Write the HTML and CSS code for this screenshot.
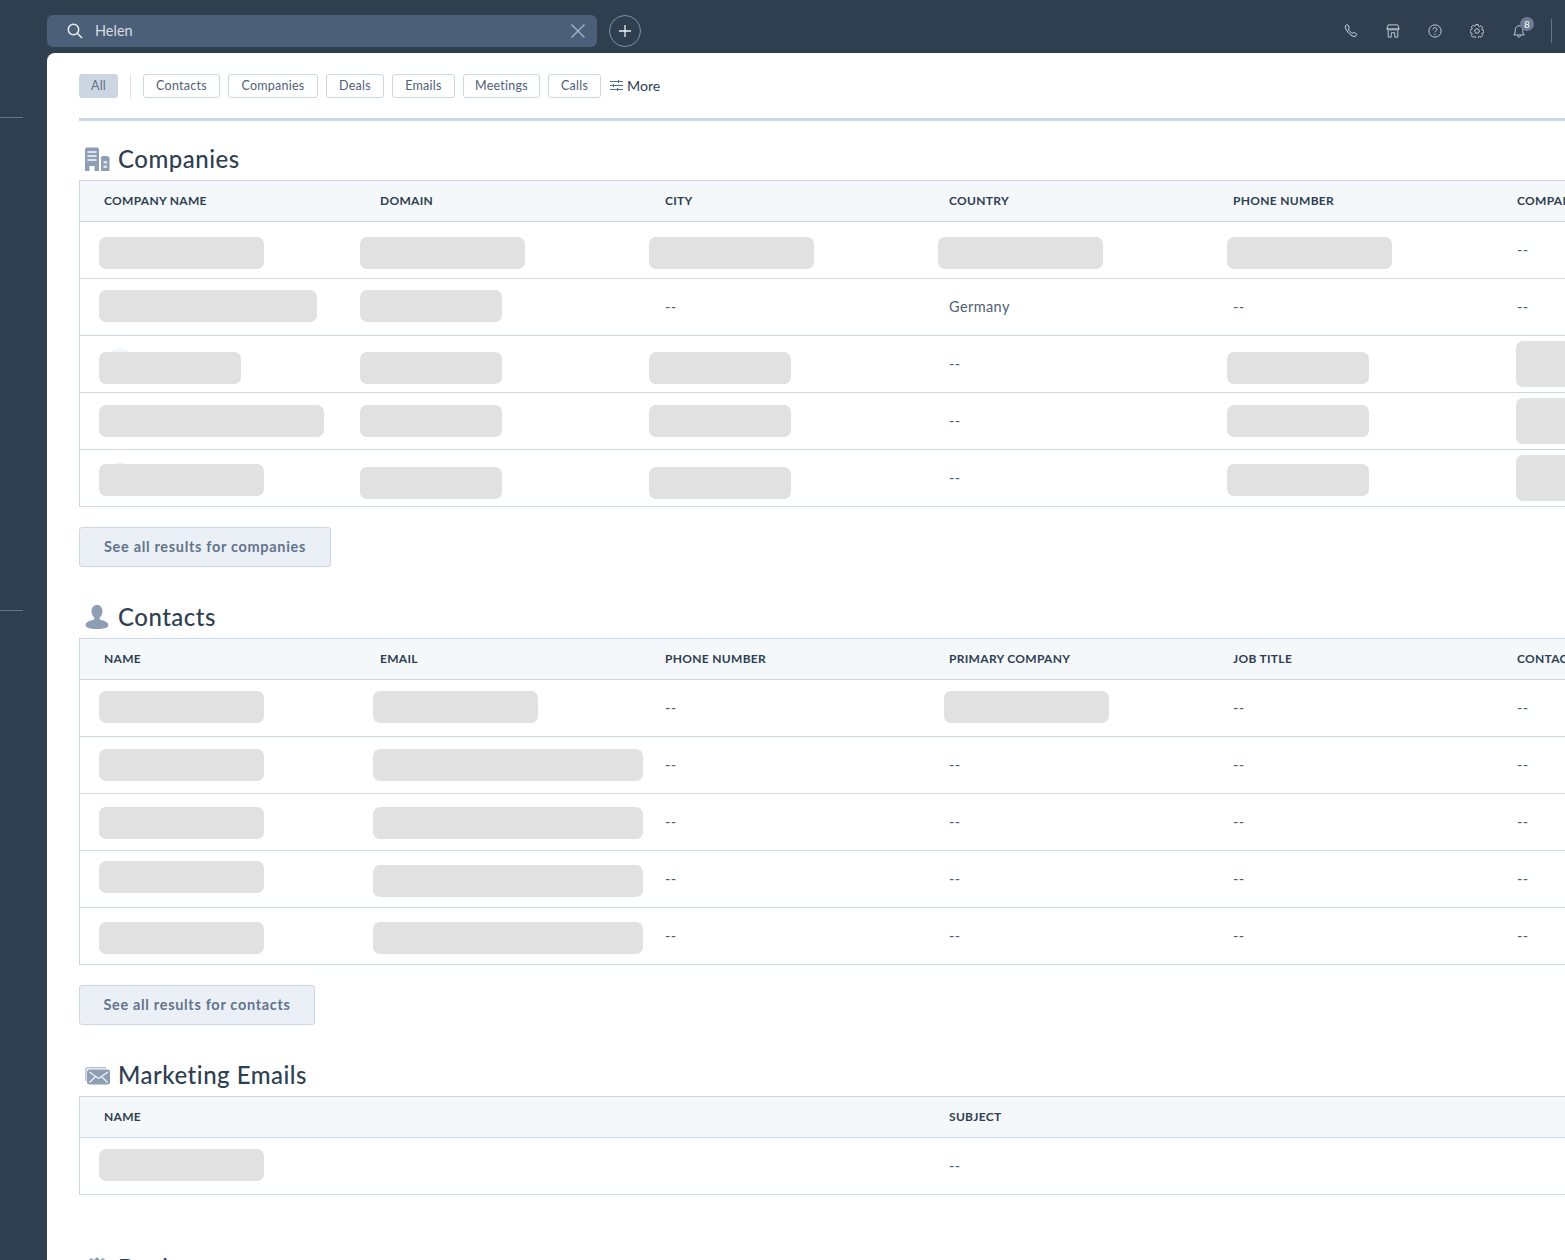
FILE: index.html
```html
<!DOCTYPE html>
<html lang="en">
<head>
<meta charset="utf-8">
<title>Search results</title>
<link rel="stylesheet" href="styles.css">
</head>
<body>
<div class="app">
  <aside class="sidebar"><div class="side-line"></div><div class="side-line second"></div></aside>
  <div class="main">
    <header class="topbar">
      <div class="search">
        <svg class="search-icon" viewBox="0 0 16 16"><circle cx="6.5" cy="6.5" r="5.2"/><path d="M10.3 10.3L15 15"/></svg>
        <span class="search-text">Helen</span>
        <svg class="search-clear" viewBox="0 0 14 14"><path d="M.5.5l13 13M13.500.5l-13 13"/></svg>
      </div>
      <button class="add"><svg viewBox="0 0 12 12"><path d="M6 0v12M0 6h12"/></svg></button>
      <div class="top-icons">
        <svg class="ti" viewBox="0 0 14 14"><path d="M1.500 1.800C2 1 3.300.5 3.900 1.100l1.300 2.300c.2.500-.6 1.300-.8 1.700-.2.600 2.800 4.300 4.100 4.100.5-.1 1.100-.9 1.700-.7l2.300 1.500c.5.500-.1 1.700-1 2.200-1.600.9-4.400-.4-6.800-3.300C2.300 6.300.6 3.500 1.500 1.800z"/></svg>
        <svg class="ti" viewBox="0 0 16 16"><path d="M2.500 1h11l1.500 4.500c0 2.200-3.300 2.200-3.500 0 0 2.200-3.300 2.200-3.500 0 0 2.200-3.300 2.200-3.500 0C4.300 7.700 1 7.700 1 5.500zM1 5.500h14M2.500 7.500V15h3.500v-5h4v5h3.500V7.500"/></svg>
        <svg class="ti" viewBox="0 0 16 16"><circle cx="8" cy="8" r="7"/><path d="M5.800 6.200C5.900 4.800 6.900 4.200 8 4.200c1.300 0 2.200.8 2.200 1.900 0 1.700-2.200 1.600-2.200 3.500"/><circle class="dot" cx="8" cy="11.800" r=".7"/></svg>
        <svg class="ti" viewBox="0 0 16 16"><circle cx="8" cy="8" r="2.600"/><path d="M6.700 .6h2.600l.4 1.900 1.300.6 1.700-1 1.800 1.800-1 1.700.6 1.300 1.900.4v2.600l-1.900.4-.6 1.300 1 1.700-1.800 1.800-1.700-1-1.300.6-.4 1.900H6.700l-.4-1.900-1.300-.6-1.700 1-1.800-1.800 1-1.700-.6-1.300-1.900-.4V6.700l1.900-.4.600-1.300-1-1.700 1.800-1.800 1.700 1 1.300-.6z"/></svg>
        <div class="bell">
          <svg class="ti" viewBox="0 0 14 16"><path d="M1 12.500c1.500-1.300 1.700-3 1.700-5.500C2.700 4 4.500 2 7 2s4.300 2 4.300 5c0 2.500.2 4.200 1.700 5.500zM5.300 13c0 2.700 3.400 2.700 3.400 0"/></svg>
          <span class="badge">8</span>
        </div>
        <div class="top-sep"></div>
      </div>
    </header>
    <main class="panel">
      <nav class="filters">
        <span class="chip active">All</span>
        <span class="filter-sep"></span>
        <span class="chip">Contacts</span>
        <span class="chip">Companies</span>
        <span class="chip">Deals</span>
        <span class="chip">Emails</span>
        <span class="chip">Meetings</span>
        <span class="chip">Calls</span>
        <span class="more">
          <svg viewBox="0 0 13 11"><path d="M0 1.500h13M0 5.500h13M0 9.500h13"/><path class="knob" d="M8.500 0v3M3.500 4v3M7.500 8v3"/></svg>
          More
        </span>
      </nav>

      <section class="section first">
        <h2 class="heading">
          <svg class="h-icon" viewBox="0 0 26 24"><path class="i-main" d="M1 2.500C1 1.500 2 .5 3 .5h10c1 0 2 1 2 2V24h-4.500v-5h-5v5H1z"/><path class="i-light" d="M3.500 4h9v2h-9zM3.500 8h9v2h-9zM3.500 12h9v2h-9z"/><path class="i-main" d="M17 11c0-1 1-2 2-2h4c1 0 2.500 1 2.500 2v13H17z"/><path class="i-light" d="M19.500 14h3.500v2.500h-3.500zM19.500 18.500h3.500V21h-3.500z"/></svg>
          Companies
        </h2>
        <div class="table">
          <div class="row head six"><div>Company name</div><div>Domain</div><div>City</div><div>Country</div><div>Phone number</div><div>Compan</div></div>
          <div class="row six">
            <div class="cell"><i class="sk w165 x19 y15"></i></div>
            <div class="cell"><i class="sk w165 x4 y15"></i></div>
            <div class="cell"><i class="sk w165 x8 y15"></i></div>
            <div class="cell"><i class="sk w165 x13 y15"></i></div>
            <div class="cell"><i class="sk w165 x18 y15"></i></div>
            <div class="cell txt">--</div>
          </div>
          <div class="row six">
            <div class="cell"><i class="sk w218 x19 y11"></i></div>
            <div class="cell"><i class="sk w142 x4 y11"></i></div>
            <div class="cell txt">--</div>
            <div class="cell txt">Germany</div>
            <div class="cell txt">--</div>
            <div class="cell txt">--</div>
          </div>
          <div class="row six">
            <div class="cell"><span class="ghost"></span><i class="sk w142 x19 y16"></i></div>
            <div class="cell"><i class="sk w142 x4 y16"></i></div>
            <div class="cell"><i class="sk w142 x8 y16"></i></div>
            <div class="cell txt">--</div>
            <div class="cell"><i class="sk w142 x18 y16"></i></div>
            <div class="cell"><i class="sk tall x23 y5"></i></div>
          </div>
          <div class="row six">
            <div class="cell"><i class="sk w225 x19 y12"></i></div>
            <div class="cell"><i class="sk w142 x4 y12"></i></div>
            <div class="cell"><i class="sk w142 x8 y12"></i></div>
            <div class="cell txt">--</div>
            <div class="cell"><i class="sk w142 x18 y12"></i></div>
            <div class="cell"><i class="sk tall x23 y5"></i></div>
          </div>
          <div class="row six">
            <div class="cell"><span class="ghost"></span><i class="sk w165 x19 y14"></i></div>
            <div class="cell"><i class="sk w142 x4 y17"></i></div>
            <div class="cell"><i class="sk w142 x8 y17"></i></div>
            <div class="cell txt">--</div>
            <div class="cell"><i class="sk w142 x18 y14"></i></div>
            <div class="cell"><i class="sk tall x23 y5"></i></div>
          </div>
        </div>
        <button class="see-all companies">See all results for companies</button>
      </section>

      <section class="section">
        <h2 class="heading">
          <svg class="h-icon" viewBox="0 0 26 24"><path class="i-main" d="M13 0c3.400 0 5.500 2.600 5.500 6.200 0 2.700-1.100 5-2.800 6.200v2c2.800.8 7.300 2 8.300 4 .6 1.200.5 2.600-.5 3.500-1.600 1.400-6.300 2.100-10.500 2.100S4.100 23.300 2.500 21.900c-1-.9-1.100-2.300-.5-3.500 1-2 5.500-3.200 8.300-4v-2C8.600 11.200 7.500 8.900 7.500 6.200 7.500 2.600 9.600 0 13 0z"/></svg>
          Contacts
        </h2>
        <div class="table">
          <div class="row head six"><div>Name</div><div>Email</div><div>Phone number</div><div>Primary company</div><div>Job title</div><div>Contac</div></div>
          <div class="row six">
            <div class="cell"><i class="sk w165 x19 y11"></i></div>
            <div class="cell"><i class="sk w165 x17 y11"></i></div>
            <div class="cell txt">--</div>
            <div class="cell"><i class="sk w165 x19 y11"></i></div>
            <div class="cell txt">--</div>
            <div class="cell txt">--</div>
          </div>
          <div class="row six">
            <div class="cell"><i class="sk w165 x19 y12"></i></div>
            <div class="cell"><i class="sk w270 x17 y12"></i></div>
            <div class="cell txt">--</div><div class="cell txt">--</div><div class="cell txt">--</div><div class="cell txt">--</div>
          </div>
          <div class="row six">
            <div class="cell"><i class="sk w165 x19 y13"></i></div>
            <div class="cell"><i class="sk w270 x17 y13"></i></div>
            <div class="cell txt">--</div><div class="cell txt">--</div><div class="cell txt">--</div><div class="cell txt">--</div>
          </div>
          <div class="row six">
            <div class="cell"><i class="sk w165 x19 y10"></i></div>
            <div class="cell"><i class="sk w270 x17 y14"></i></div>
            <div class="cell txt">--</div><div class="cell txt">--</div><div class="cell txt">--</div><div class="cell txt">--</div>
          </div>
          <div class="row six">
            <div class="cell"><i class="sk w165 x19 y14"></i></div>
            <div class="cell"><i class="sk w270 x17 y14"></i></div>
            <div class="cell txt">--</div><div class="cell txt">--</div><div class="cell txt">--</div><div class="cell txt">--</div>
          </div>
        </div>
        <button class="see-all contacts">See all results for contacts</button>
      </section>

      <section class="section">
        <h2 class="heading">
          <svg class="h-icon" viewBox="0 0 26 24"><path class="i-pale" d="M1 6.500C1 5 2 4 3.500 4H22v1.500H4C3 5.500 2.500 6 2.500 7v11H1z"/><rect class="i-main" x="3" y="6.500" width="23" height="15" rx="2.500"/><path class="i-line" d="M5.500 9l9 6.500L24 9M5.500 19.500l6-6M23.500 19.500l-6-6"/></svg>
          Marketing Emails
        </h2>
        <div class="table">
          <div class="row head two"><div>Name</div><div>Subject</div></div>
          <div class="row two">
            <div class="cell"><i class="sk w165 x19 y11"></i></div>
            <div class="cell txt">--</div>
          </div>
        </div>
      </section>

      <section class="section last">
        <h2 class="heading">
          <svg class="h-icon" viewBox="0 0 26 24"><path class="i-main" d="M1 8l6-6 3 2 3-3 3 3 3-2 6 6-3 6H4z"/></svg>
          Deals
        </h2>
      </section>
    </main>
  </div>
</div>
</body>
</html>
```

FILE: styles.css
```css
* { box-sizing: border-box; }
html, body { margin: 0; height: 1260px; overflow: hidden; }
body { font-family: Lato, "Noto Sans", sans-serif; color: #2f3f52; background: #303f50; }

.app { display: flex; height: 1260px; }

.sidebar { width: 47px; flex: none; padding-top: 117px; }
.side-line { width: 23px; height: 1px; background: #63758a; }
.side-line.second { margin-top: 492px; }

.main { flex: 1; min-width: 0; display: flex; flex-direction: column; }

.topbar { height: 53px; flex: none; display: flex; align-items: flex-start; padding-top: 15px; }
.search { width: 550px; height: 32px; background: #4b5f78; border-radius: 6px; display: flex; align-items: center; padding: 0 12px 0 20px; color: #d5dbe4; }
.search-icon { width: 16px; height: 16px; fill: none; stroke: #eaf0f6; stroke-width: 1.5; flex: none; }
.search-text { margin-left: 12px; padding-bottom: 2px; font-size: 14.5px; flex: 1; }
.search-clear { width: 14px; height: 14px; fill: none; stroke: #a9b6c6; stroke-width: 1.3; flex: none; }
.add { width: 32px; height: 32px; margin-left: 12px; padding: 0; background: transparent; border: 1px solid #8091a6; border-radius: 50%; display: flex; align-items: center; justify-content: center; }
.add svg { width: 12px; height: 12px; fill: none; stroke: #eaf0f6; stroke-width: 1.300; }

.top-icons { margin-left: auto; display: flex; align-items: center; height: 32px; padding-right: 13px; }
.ti { width: 14px; height: 14px; fill: none; stroke: #d5dbe4; stroke-width: 1; display: block; margin-left: 28px; }
.ti .dot { fill: #d5dbe4; stroke: none; }
.bell { position: relative; }
.badge { position: absolute; top: -7px; left: 36px; width: 14px; height: 14px; border-radius: 50%; background: #6a7b92; color: #fff; font-size: 10px; line-height: 14px; text-align: center; }
.top-sep { width: 1px; height: 24px; background: #63758a; margin-left: 25px; }

.panel { flex: 1; min-height: 0; background: #fff; border-top-left-radius: 8px; padding: 21px 0 0 32px; overflow: hidden; }

.filters { display: grid; grid-template-columns: 39px 9px 77px 90px 58px 63px 77px 53px auto; column-gap: 8px; align-items: center; justify-content: start; height: 47px; padding-bottom: 20px; border-bottom: 3px solid #cbd6e2; }
.chip { height: 24px; border: 1px solid #cbd6e2; border-radius: 3px; font-size: 12.500px; line-height: 22px; letter-spacing: .25px; text-align: center; color: #4f6176; }
.chip.active { background: #cbd6e2; color: #5f7088; }
.filter-sep { width: 1px; height: 24px; background: #dfe3eb; justify-self: center; }
.more { display: flex; align-items: center; gap: 4px; padding-bottom: 1px; font-size: 14.200px; color: #2f3f52; margin-left: 1px; }
.more svg { width: 13px; height: 11px; fill: none; stroke: #516f90; stroke-width: 1; }

.section { width: 1700px; padding-top: 34px; }
.section.first { padding-top: 22px; }
.section.last { padding-top: 57px; }

.heading { height: 32px; margin: 0 0 5px; font-size: 24px; line-height: 32px; font-weight: 500; color: #2f3f52; display: flex; align-items: center; letter-spacing: .5px; }
.h-icon { width: 26px; height: 24px; margin: 0 8px 0 5px; flex: none; }
.i-main { fill: #8e9eb4; }
.i-light { fill: #dfe3eb; }
.i-pale { fill: #b9c5d4; }
.i-line { fill: none; stroke: #f0f3f8; stroke-width: 1.300; }

.table { border: 1px solid #cbd6e2; border-right: 0; }
.row { display: grid; height: 57px; border-bottom: 1px solid #cbd6e2; }
.row:last-child { border-bottom: 0; height: 56px; }
.row.six { grid-template-columns: 276px 285px 284px 284px 284px 287px; }
.row.two { grid-template-columns: 845px 1fr; }
.head { height: 41px; padding-bottom: 2px; background: #f5f8fa; font-size: 12px; font-weight: 700; letter-spacing: .3px; text-transform: uppercase; align-items: center; color: #2f3f52; }
.head > div { padding-left: 24px; overflow: hidden; white-space: nowrap; }

.cell { position: relative; min-width: 0; }
.txt { padding-left: 24px; font-size: 14.500px; line-height: 56px; letter-spacing: .4px; color: #4f6176; }

.sk { position: relative; display: block; height: 32px; background: #e1e1e1; border-radius: 7px; }
.sk.tall { height: 46px; width: 120px; }
.w142 { width: 142px; } .w165 { width: 165px; } .w218 { width: 218px; } .w225 { width: 225px; } .w270 { width: 270px; }
.x4 { margin-left: 4px; } .x8 { margin-left: 8px; } .x13 { margin-left: 13px; } .x17 { margin-left: 17px; } .x18 { margin-left: 18px; } .x19 { margin-left: 19px; } .x23 { margin-left: 23px; }
.y5 { margin-top: 5px; } .y10 { margin-top: 10px; } .y11 { margin-top: 11px; } .y12 { margin-top: 12px; } .y13 { margin-top: 13px; } .y14 { margin-top: 14px; } .y15 { margin-top: 15px; } .y16 { margin-top: 16px; } .y17 { margin-top: 17px; }

.ghost { position: absolute; left: 27px; top: 12px; width: 26px; height: 26px; border-radius: 50%; background: #f2f5f9; }

.see-all { display: block; height: 40px; margin-top: 20px; padding: 0 0 2px; background: #eaf0f6; border: 1px solid #cbd6e2; border-radius: 3px; font-family: inherit; font-size: 14.500px; font-weight: 700; color: #64748c; letter-spacing: .68px; }
.see-all.companies { width: 252px; }
.see-all.contacts { width: 236px; }
```
